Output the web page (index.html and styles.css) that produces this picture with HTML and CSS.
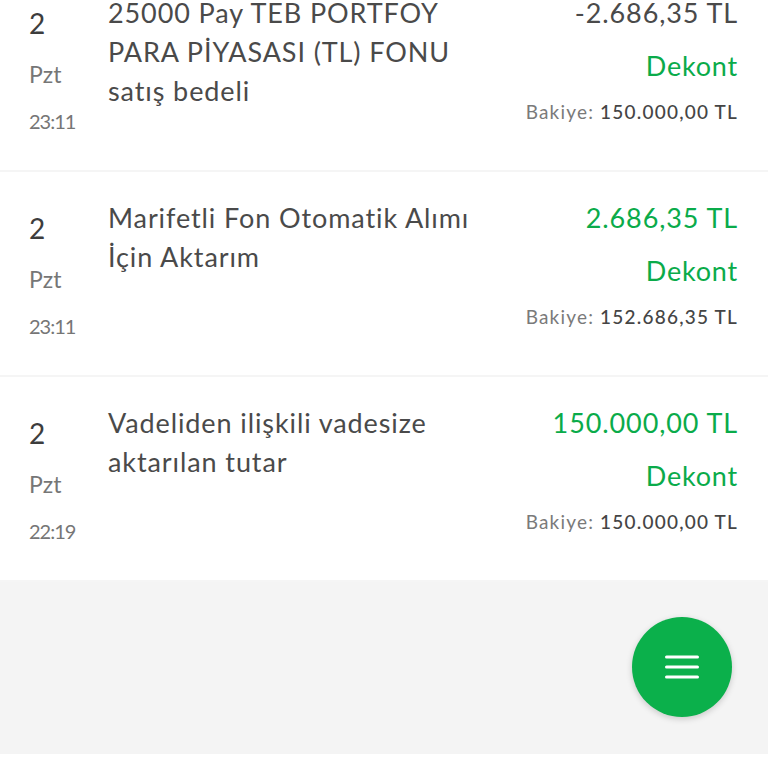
FILE: index.html
```html
<!DOCTYPE html>
<html>
<head>
	<meta charset="utf-8">
	<title>Hesap hareketleri</title>
	<link rel="stylesheet" href="styles.css">
</head>

<body>

	<div class="list">
		<!-- hareket 1 -->
		<div class="row">
			<div class="date">
				<div class="day">2</div>
				<div class="wday">Pzt</div>
				<div class="time">23:11</div>
			</div>
			<div class="desc">25000 Pay TEB PORTFOY PARA PİYASASI (TL) FONU satış bedeli</div>
			<div class="money">
				<div class="amount">-2.686,35 TL</div>
				<div class="dekont">Dekont</div>
				<div class="balance"><span class="blabel">Bakiye:</span> 150.000,00 TL</div>
			</div>
		</div>

		<!-- hareket 2 -->
		<div class="row">
			<div class="date">
				<div class="day">2</div>
				<div class="wday">Pzt</div>
				<div class="time">23:11</div>
			</div>
			<div class="desc">Marifetli Fon Otomatik Alımı İçin Aktarım</div>
			<div class="money">
				<div class="amount plus">2.686,35 TL</div>
				<div class="dekont">Dekont</div>
				<div class="balance"><span class="blabel">Bakiye:</span> 152.686,35 TL</div>
			</div>
		</div>

		<!-- hareket 3 -->
		<div class="row">
			<div class="date">
				<div class="day">2</div>
				<div class="wday">Pzt</div>
				<div class="time">22:19</div>
			</div>
			<div class="desc">Vadeliden ilişkili vadesize aktarılan tutar</div>
			<div class="money">
				<div class="amount plus">150.000,00 TL</div>
				<div class="dekont">Dekont</div>
				<div class="balance"><span class="blabel">Bakiye:</span> 150.000,00 TL</div>
			</div>
		</div>
	</div>

	<div class="empty"></div>
	<div class="bottom"></div>

	<!-- menü butonu -->
	<button class="fab">
		<svg width="34" height="24" viewBox="0 0 34 24">
			<path d="M1.5 2h31M1.5 12h31M1.5 22h31" stroke="#fff" stroke-width="3" stroke-linecap="round"/>
		</svg>
	</button>

</body>
</html>
```

FILE: styles.css
```css
* {
    box-sizing: border-box;
}

html, body {
    margin: 0;
    padding: 0;
}

body {
    font-family: Lato, "Open Sans", sans-serif;
    color: #4a4a4a;
    background: #fff;
    height: 768px;
    overflow: hidden;
    position: relative;
}

/* liste biraz yukarı kaymış halde */
.list {
    margin-top: -33px;
}

.row {
    display: flex;
    height: 205px;
    padding: 26px 30px 0 29px;
    border-bottom: 2px solid #f5f5f5;
}

.date {
    width: 79px;
    flex-shrink: 0;
}

.day {
    font-size: 28px;
    line-height: 39px;
    margin-top: 11px;
    color: #3d3d3d;
}

.wday {
    font-size: 23px;
    line-height: 30px;
    margin-top: 16px;
    color: #767676;
}

.time {
    font-size: 20px;
    line-height: 28px;
    margin-top: 18px;
    letter-spacing: -1px;
    color: #767676;
}

.desc {
    width: 380px;
    flex-shrink: 0;
    font-size: 27px;
    line-height: 39px;
    letter-spacing: 0.9px;
    color: #4a4a4a;
}

.money {
    flex: 1;
    text-align: right;
    white-space: nowrap;
}

.amount {
    font-size: 27px;
    line-height: 39px;
    letter-spacing: 0.9px;
    color: #4a4a4a;
}

.amount.plus {
    color: #0aab4a;
}

.dekont {
    font-size: 27px;
    line-height: 39px;
    margin-top: 14px;
    letter-spacing: 0.8px;
    color: #0aab4a;
}

.balance {
    font-size: 19px;
    line-height: 26px;
    margin-top: 14px;
    letter-spacing: 1.2px;
    color: #454545;
    font-weight: 500;
}

.blabel {
    color: #7a7a7a;
    font-weight: 400;
}

.empty {
    height: 172px;
    background: #f4f4f4;
}

.bottom {
    height: 20px;
    background: #fff;
}

.fab {
    position: absolute;
    right: 36px;
    top: 617px;
    width: 100px;
    height: 100px;
    border-radius: 50%;
    border: none;
    background: #0bb04b;
    box-shadow: 0 2px 6px rgba(0, 0, 0, 0.18);
    display: flex;
    align-items: center;
    justify-content: center;
    padding: 0;
    cursor: pointer;
}
```
